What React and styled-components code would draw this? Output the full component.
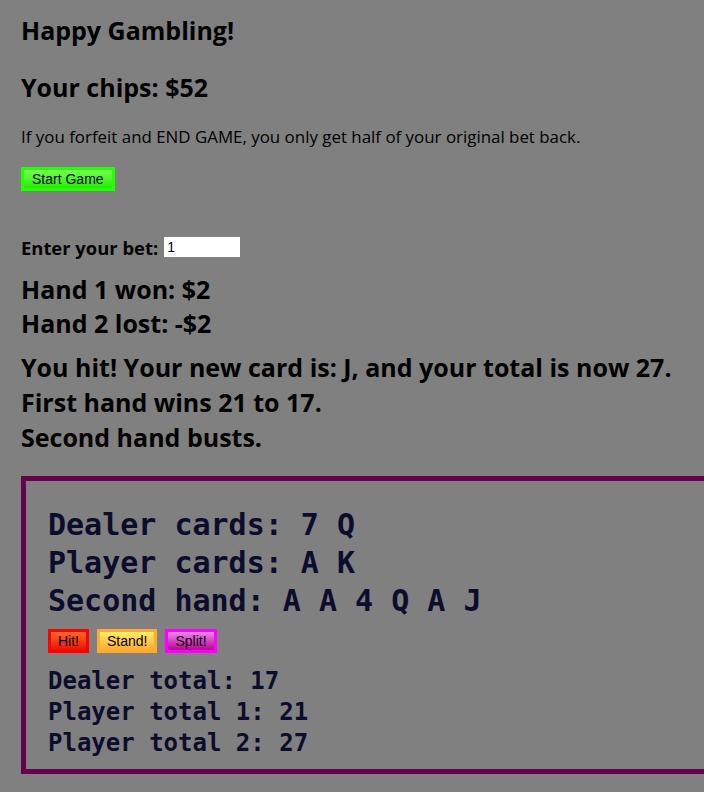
import React from "react";
import styled, { createGlobalStyle } from "styled-components";

const Global = createGlobalStyle`
  html, body { margin: 0; padding: 0; background: #808080; overflow: hidden; }
  body { font-family: "Open Sans", "Noto Sans", sans-serif; color: #000; }
`;

const Page = styled.div`
  padding: 16px 0 0 21px;
  display: flex;
  flex-direction: column;
  align-items: flex-start;
`;

const Heading = styled.h2`
  margin: 0 0 ${(p) => p.$after || 0}px 0;
  font-size: 25px;
  font-weight: 700;
  line-height: ${(p) => p.$lh || 28}px;
  white-space: nowrap;
`;

const Note = styled.p`
  margin: 0 0 19px 0;
  font-size: 16.9px;
  line-height: 22px;
  white-space: nowrap;
`;

const GameButton = styled.button`
  font-family: "Liberation Sans", Arial, sans-serif;
  font-size: 14px;
  color: #000;
  height: 24px;
  padding: 0 ${(p) => p.$pad || 7}px;
  border: 3px solid ${(p) => p.$edge};
  background: linear-gradient(${(p) => p.$top}, ${(p) => p.$bottom});
  cursor: pointer;
`;

const BetRow = styled.label`
  margin: 46px 0 15px 0;
  display: flex;
  align-items: center;
  gap: 6px;
  font-size: 18.4px;
  font-weight: 700;
  height: 20px;
`;

const BetInput = styled.input`
  width: 76px;
  height: 20px;
  box-sizing: border-box;
  border: none;
  padding: 0 3px;
  background: #fff;
  font-family: "Liberation Sans", Arial, sans-serif;
  font-size: 14px;
  color: #000;
`;

const Lines = styled.div`
  margin-bottom: ${(p) => p.$after}px;
`;

const Table = styled.section`
  box-sizing: border-box;
  width: 720px;
  border: 5px solid #680050;
  padding: 25px 22px 10px 22px;
  font-family: "DejaVu Sans Mono", "Liberation Mono", monospace;
  font-weight: 700;
  color: #0c0c2c;
`;

const CardLine = styled.div`
  font-size: 30px;
  line-height: 38px;
  white-space: pre;
`;

const Actions = styled.div`
  display: flex;
  gap: 8px;
  margin: 9px 0 13px 0;
`;

const TotalLine = styled.div`
  font-size: 24px;
  line-height: 31px;
  white-space: pre;
`;

export default function App() {
  return (
    <>
      <Global />
      <Page>
        <Heading $after={29}>Happy Gambling!</Heading>
        <Heading $after={25}>Your chips: $52</Heading>
        <Note>If you forfeit and END GAME, you only get half of your original bet back.</Note>
        <GameButton $pad={8} $edge="#22ff00" $top="#77ff55" $bottom="#22ee00">Start Game</GameButton>
        <BetRow>
          Enter your bet: <BetInput defaultValue="1" />
        </BetRow>
        <Lines $after={10}>
          <Heading $lh={34}>Hand 1 won: $2</Heading>
          <Heading $lh={34}>Hand 2 lost: -$2</Heading>
        </Lines>
        <Lines $after={21}>
          <Heading $lh={35}>You hit! Your new card is: J, and your total is now 27.</Heading>
          <Heading $lh={35}>First hand wins 21 to 17.</Heading>
          <Heading $lh={35}>Second hand busts.</Heading>
        </Lines>
        <Table>
          <CardLine>Dealer cards: 7 Q</CardLine>
          <CardLine>Player cards: A K</CardLine>
          <CardLine>Second hand: A A 4 Q A J</CardLine>
          <Actions>
            <GameButton $edge="#ff0000" $top="#ff6a2a" $bottom="#ee1100">Hit!</GameButton>
            <GameButton $edge="#ffaa33" $top="#ffee66" $bottom="#ffaa30">Stand!</GameButton>
            <GameButton $edge="#ff00ff" $top="#ee88ee" $bottom="#bb0099">Split!</GameButton>
          </Actions>
          <TotalLine>Dealer total: 17</TotalLine>
          <TotalLine>Player total 1: 21</TotalLine>
          <TotalLine>Player total 2: 27</TotalLine>
        </Table>
      </Page>
    </>
  );
}
